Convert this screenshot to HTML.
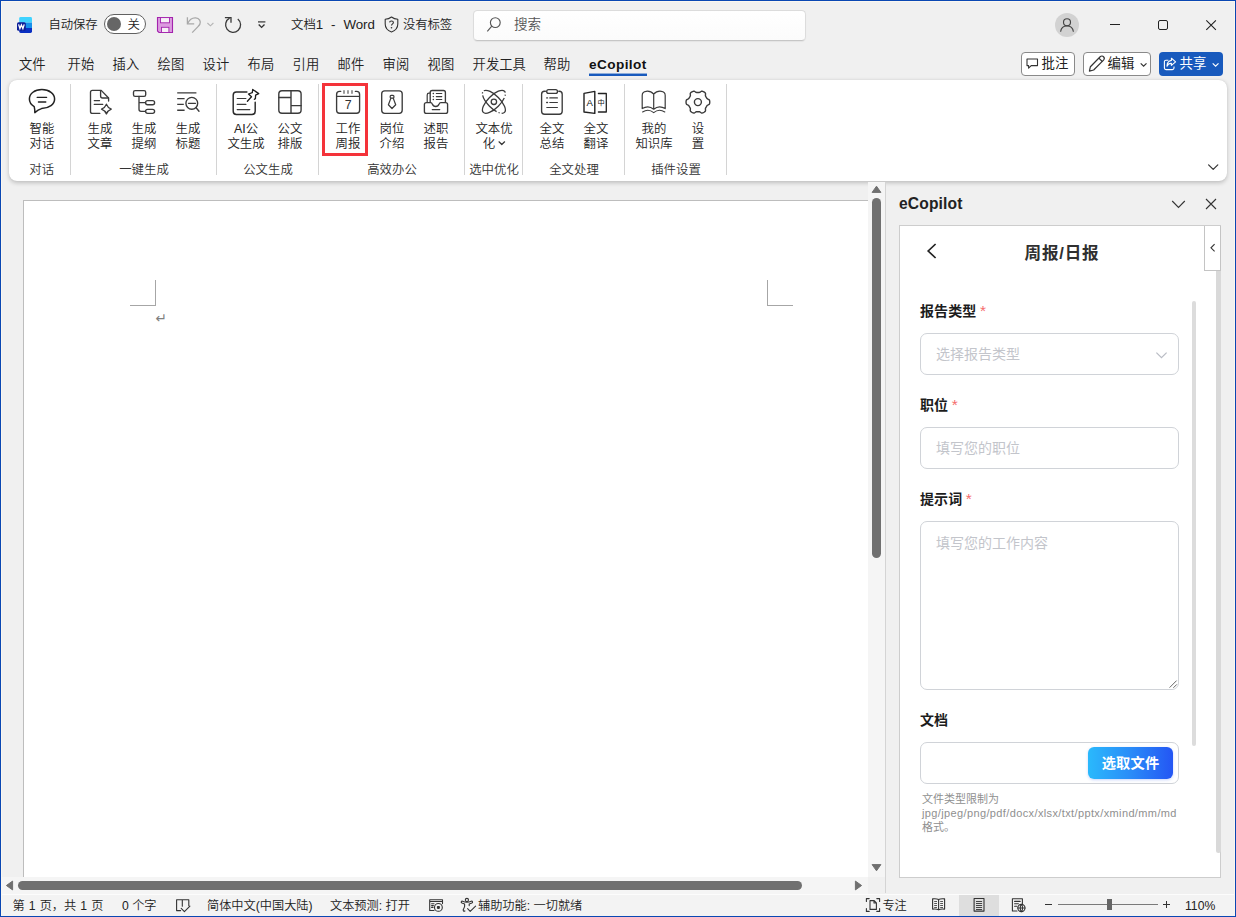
<!DOCTYPE html>
<html lang="zh-CN">
<head>
<meta charset="utf-8">
<title>文档1 - Word</title>
<style>
*{box-sizing:border-box;margin:0;padding:0}
html,body{width:1236px;height:917px;overflow:hidden}
body{background:#f0f0f0;font-family:"Liberation Sans","Noto Sans CJK SC",sans-serif;color:#222;position:relative;font-size:12px}
.abs{position:absolute}
.t{position:absolute;white-space:nowrap;line-height:1}
svg{position:absolute;overflow:visible}
#frame{position:absolute;left:0;top:0;width:1236px;height:917px;border:1px solid #0a47b3;pointer-events:none;z-index:50}
#frame2{position:absolute;left:1px;top:1px;width:1234px;height:915px;border:1px solid #fbf7f0;border-bottom:none;pointer-events:none;z-index:49}
/* title bar */
.tb{font-size:13px;color:#222;font-weight:350}
/* tabs */
.tab{position:absolute;top:58px;font-weight:350;font-size:13.3px;line-height:14px;color:#222;white-space:nowrap}
/* ribbon */
#ribbon{position:absolute;left:8.5px;top:80px;width:1218.5px;height:101px;background:#fff;border-radius:8px;box-shadow:0 1.5px 4px rgba(0,0,0,.2),0 0 1px rgba(0,0,0,.1)}
.rb{font-weight:350;position:absolute;top:121.5px;width:60px;margin-left:-30px;text-align:center;font-size:12.4px;line-height:15.1px;color:#222;white-space:nowrap}
.gl{font-weight:350;position:absolute;top:162.5px;width:80px;margin-left:-40px;text-align:center;font-size:12.4px;line-height:14px;color:#333;white-space:nowrap}
.sep{position:absolute;top:84px;width:1px;height:91px;background:#d4d4d4}
/* status */
.st{font-weight:350;position:absolute;top:899.4px;font-size:12.2px;line-height:14px;color:#222;white-space:nowrap}
.fl{font-size:14px;line-height:18px;font-weight:bold;color:#1c1c1c;letter-spacing:0.1px}
.rq{color:#f56c6c;font-weight:normal;font-size:15.5px;position:relative;top:0px;left:-0.5px;font-family:'Liberation Sans',sans-serif}
.fb{background:#fff;border:1px solid #d0d3d8;border-radius:7px}
.ph{font-size:14px;line-height:17px;color:#c3c5cb}
.hp{font-size:11px;line-height:13px;color:#8f8f8f}
</style>
</head>
<body>
<div id="frame"></div><div id="frame2"></div>

<!-- TITLEBAR -->
<div id="titlebar">
<!-- word icon -->
<svg style="left:16px;top:16px" width="18" height="18" viewBox="0 0 18 18">
 <defs><clipPath id="wc"><rect x="3.2" y="1" width="12.8" height="16" rx="1.4"/></clipPath></defs>
 <g clip-path="url(#wc)"><rect x="3" y="1" width="13" height="5.6" fill="#3fd3ff"/><rect x="3" y="6.6" width="13" height="5.4" fill="#1690ea"/><rect x="3" y="12" width="13" height="5" fill="#0a2fc2"/></g>
 <rect x="1" y="6.2" width="8.8" height="8.6" rx="1.6" fill="#0c1f98"/>
 <path d="M2.6 8.4 L3.9 12.6 L5.4 8.9 L6.9 12.6 L8.2 8.4" fill="none" stroke="#fff" stroke-width="1.3" stroke-linejoin="miter"/>
</svg>
<div class="t tb" style="left:48.4px;top:17.5px;font-size:12.4px;line-height:14px;letter-spacing:-0.1px">自动保存</div>
<div class="abs" style="left:104px;top:14px;width:42px;height:20px;border:1px solid #616161;border-radius:10px;background:#fff"></div>
<div class="abs" style="left:107px;top:17px;width:14px;height:14px;border-radius:50%;background:#666"></div>
<div class="t tb" style="left:127.6px;top:17.5px;font-size:12.4px;line-height:14px">关</div>
<!-- save -->
<svg style="left:156px;top:16px" width="18" height="18" viewBox="0 0 18 18"><path d="M1.5 1.5 H16.5 V16.5 H3 L1.5 15 Z" fill="#dc9be0" stroke="#a323ad" stroke-width="1.1" stroke-linejoin="miter"/><rect x="4.5" y="1.6" width="9" height="5.2" fill="#f6f0f7" stroke="#a323ad" stroke-width="0.9"/><rect x="5.5" y="11.3" width="7.4" height="5.2" fill="#f6f0f7" stroke="#a323ad" stroke-width="0.9"/></svg>
<!-- undo -->
<svg style="left:186px;top:15px" width="30" height="20" viewBox="0 0 30 20"><path d="M1.4 2.2 V8.8 H8.2" fill="none" stroke="#a8a8a8" stroke-width="1.3"/><path d="M1.6 8.6 C3.5 4.5 6.5 2.6 9.6 2.8 C13.5 3.1 15.2 6.6 13.8 9.4 C13.4 10.2 12.8 10.8 12 11.6 L6.2 17.6" fill="none" stroke="#a8a8a8" stroke-width="1.3"/><path d="M21.4 8 L24.4 10.8 L27.4 8" fill="none" stroke="#b4b4b4" stroke-width="1.1"/></svg>
<!-- redo -->
<svg style="left:223px;top:14px" width="20" height="20" viewBox="0 0 20 20"><path d="M6.6 4.2 A7.5 7.5 0 1 0 14.8 5" fill="none" stroke="#3a3a3a" stroke-width="1.3"/><path d="M1.9 3.7 H8 V8.7" fill="none" stroke="#3a3a3a" stroke-width="1.3"/></svg>
<!-- qat -->
<svg style="left:256px;top:19px" width="12" height="10" viewBox="0 0 12 10"><path d="M2 2.9 H9.4" stroke="#333" stroke-width="1.2"/><path d="M2.7 5.6 L5.6 8.4 L8.5 5.6" fill="none" stroke="#333" stroke-width="1.4"/></svg>
<div class="t tb" style="left:291px;top:17px;font-size:13.3px;line-height:15px"><span style="font-size:12.4px">文档</span>1</div><div class="t tb" style="left:331px;top:17px;font-size:13.3px;line-height:15px">-</div><div class="t tb" style="left:343.4px;top:17px;font-size:13.3px;line-height:15px">Word</div>
<!-- shield -->
<svg style="left:384px;top:16px" width="15" height="17" viewBox="0 0 15 17"><path d="M7.5 1 C9.5 2.6 11.5 3.2 13.8 3.3 V8 C13.8 11.8 11.3 14.6 7.5 16 C3.7 14.6 1.2 11.8 1.2 8 V3.3 C3.5 3.2 5.5 2.6 7.5 1 Z" fill="none" stroke="#333" stroke-width="1.1" stroke-linejoin="round"/><path d="M5.6 6.4 C5.7 4.6 9.4 4.6 9.4 6.5 C9.4 7.9 7.5 7.9 7.5 9.6" fill="none" stroke="#333" stroke-width="1.1"/><circle cx="7.5" cy="11.8" r="0.8" fill="#333"/></svg>
<div class="t tb" style="left:403px;top:17.5px;font-size:12.4px;line-height:14px;letter-spacing:-0.1px">没有标签</div>
<!-- search -->
<div class="abs" style="left:473px;top:9.5px;width:333px;height:31.5px;background:linear-gradient(#fff,#fbfbfb);border:1px solid #dcdcdc;border-bottom-color:#c6c6c6;border-radius:4.5px;box-shadow:0 1px 1px rgba(0,0,0,.05)"></div>
<svg style="left:486px;top:16px" width="16" height="17" viewBox="0 0 16 17"><circle cx="9.3" cy="6.6" r="4.9" fill="none" stroke="#555" stroke-width="1.15"/><path d="M5.8 10.2 L1.3 15.4" stroke="#555" stroke-width="1.15"/></svg>
<div class="t tb" style="left:514px;top:17px;font-size:13.6px;line-height:15px;color:#555">搜索</div>
<!-- avatar -->
<div class="abs" style="left:1055px;top:13px;width:24px;height:24px;border-radius:50%;background:#d2d2d2"></div>
<svg style="left:1059px;top:17px" width="16" height="16" viewBox="0 0 16 16"><circle cx="8" cy="5.2" r="3.5" fill="none" stroke="#444" stroke-width="1.15"/><path d="M1.6 14.8 C2.6 6.8 13.4 6.8 14.4 14.8" fill="none" stroke="#444" stroke-width="1.15"/></svg>
<div class="abs" style="left:1110px;top:24px;width:10px;height:1px;background:#222"></div>
<div class="abs" style="left:1158px;top:20px;width:10px;height:10px;border:1px solid #222;border-radius:2px"></div>
<svg style="left:1206px;top:20px" width="12" height="12" viewBox="0 0 12 12"><path d="M0.3 0.3 L9.9 9.9 M9.9 0.3 L0.3 9.9" stroke="#222" stroke-width="1.1"/></svg>
<!-- right buttons -->
<div class="abs" style="left:1021px;top:52px;width:54px;height:24px;background:#fff;border:1px solid #8a8a8a;border-radius:4px"></div>
<svg style="left:1026px;top:58px" width="13" height="12" viewBox="0 0 13 12"><path d="M1 1 H11.5 V7.6 H5.2 L2.6 10.2 V7.6 H1 Z" fill="none" stroke="#333" stroke-width="1.1" stroke-linejoin="round"/></svg>
<div class="t" style="left:1041.5px;top:56px;font-size:13.4px;line-height:15px;color:#222">批注</div>
<div class="abs" style="left:1083px;top:52px;width:68px;height:24px;background:#fff;border:1px solid #8a8a8a;border-radius:4px"></div>
<svg style="left:1087.6px;top:55.4px" width="17.4" height="17.4" viewBox="0 0 16 16"><path d="M11.2 1.6 C12.2 0.6 13.6 0.8 14.3 1.6 C15.1 2.4 15.2 3.7 14.3 4.7 L5.2 13.8 L1.3 14.8 L2.2 10.8 Z" fill="none" stroke="#333" stroke-width="1.1" stroke-linejoin="round"/><path d="M10 2.9 L13.1 6" stroke="#333" stroke-width="1.1"/></svg>
<div class="t" style="left:1107.5px;top:56px;font-size:13.4px;line-height:15px;color:#222">编辑</div>
<svg style="left:1139px;top:61.5px" width="9" height="6" viewBox="0 0 9 6"><path d="M1.7 1.4 L4.6 4.2 L7.5 1.4" fill="none" stroke="#333" stroke-width="1.2"/></svg>
<div class="abs" style="left:1159px;top:52px;width:64px;height:24px;background:#185abd;border-radius:4px"></div>
<svg style="left:1163px;top:57px" width="14" height="14" viewBox="0 0 14 14"><path d="M5.4 3.2 H3 C2 3.2 1.4 3.8 1.4 4.8 V11 C1.4 12 2 12.6 3 12.6 H9.4 C10.4 12.6 11 12 11 11 V9.6" fill="none" stroke="#fff" stroke-width="1.1"/><path d="M8.4 1.2 L12.6 4.9 L8.4 8.4 V6.4 C6.2 6.3 4.9 7.2 4 9.2 C4.1 5.8 5.6 3.8 8.4 3.4 Z" fill="none" stroke="#fff" stroke-width="1.1" stroke-linejoin="round"/></svg>
<div class="t" style="left:1179.5px;top:56px;font-size:13.4px;line-height:15px;color:#fff">共享</div>
<svg style="left:1211px;top:61.5px" width="9" height="6" viewBox="0 0 9 6"><path d="M1.7 1.4 L4.6 4.2 L7.5 1.4" fill="none" stroke="#fff" stroke-width="1.2"/></svg>
</div>

<!-- TABS -->
<div id="tabs">
<div class="tab" style="left:19px">文件</div>
<div class="tab" style="left:67.6px">开始</div>
<div class="tab" style="left:112.6px">插入</div>
<div class="tab" style="left:157.6px">绘图</div>
<div class="tab" style="left:202.6px">设计</div>
<div class="tab" style="left:247.6px">布局</div>
<div class="tab" style="left:292.6px">引用</div>
<div class="tab" style="left:337.6px">邮件</div>
<div class="tab" style="left:382.6px">审阅</div>
<div class="tab" style="left:427.6px">视图</div>
<div class="tab" style="left:472.6px">开发工具</div>
<div class="tab" style="left:543.6px">帮助</div>
<div class="tab" style="left:589px;font-weight:bold;font-size:13.6px;color:#111;letter-spacing:0.42px">eCopilot</div>
<div class="abs" style="left:589px;top:73px;width:58px;height:1px;background:rgba(24,90,189,.45)"></div><div class="abs" style="left:589px;top:74px;width:58px;height:2px;background:#185abd"></div>
</div>

<!-- RIBBON -->
<div id="ribbon"></div>
<div id="ribbonc">
<svg id="ricons" style="left:0;top:0" width="1236" height="200" viewBox="0 0 1236 200">
<g stroke="#3b3b3b" fill="none" stroke-width="1.35" stroke-linecap="round" stroke-linejoin="round">
<!-- 1 chat -->
<path d="M41.9 89.6 C49.2 89.6 54.6 93.6 54.6 99 C54.6 104.4 49.4 108.2 41.5 108.6 C38.8 109.4 37 110.6 34.8 112.6 C34.9 110.6 34.7 108.6 34.2 106.6 C31.2 104.8 29.4 102.2 29.4 99 C29.4 93.6 34.6 89.6 41.9 89.6 Z" stroke="#222" stroke-width="1.5"/>
<path d="M37.2 97.4 H46.6 M38.4 102 H45.8" stroke="#222" stroke-width="1.3"/>
<!-- 2 doc sparkle -->
<path d="M99.8 113.4 H92.4 C91.2 113.4 90.5 112.7 90.5 111.5 V92.3 C90.5 91.1 91.2 90.4 92.4 90.4 H101.2 L108.6 98 V101"/>
<path d="M100.6 90.6 V96 C100.6 97.4 101.3 98 102.6 98 H108.4"/>
<path d="M94.2 100.6 H99.6 M94.2 104.4 H102.8" stroke-width="1.1"/>
<path d="M106.4 104.2 C107.3 106.6 108.8 108.2 111.3 109.1 C108.8 110 107.3 111.6 106.4 114 C105.5 111.6 104 110 101.5 109.1 C104 108.2 105.5 106.6 106.4 104.2 Z" stroke-width="1.25"/>
<!-- 3 tree -->
<rect x="133.5" y="90.6" width="12.2" height="5.8" rx="1.6"/>
<path d="M139 96.4 V109.2 C139 110.6 139.7 111.3 141 111.3 H145.4 M139 102.6 H145.4"/>
<rect x="145.6" y="100.6" width="9" height="4.1" rx="2.05"/>
<rect x="145.6" y="109.3" width="9" height="4.1" rx="2.05"/>
<!-- 4 lines + search -->
<path d="M177.2 92.8 H196.4 M177.2 98.6 H184.6 M177.2 104.3 H183.8 M177.2 110.2 H184.6" stroke-linecap="butt"/>
<circle cx="191.8" cy="103.3" r="5.9"/>
<path d="M188.5 103.3 H195.5 M196.1 107.8 L199 111.2"/>
<!-- 5 note + pin -->
<path d="M246.9 92 H236.4 C234.3 92 233.2 93.1 233.2 95.2 V111.2 C233.2 113.3 234.3 114.4 236.4 114.4 H252 C254.1 114.4 255.2 113.3 255.2 111.2 V102.3" stroke-width="1.45" stroke="#2a2a2a"/>
<path d="M237.2 98.5 H245.9 M237.2 104.4 H245.9 M237.2 109.6 H249.8" stroke-width="1.2"/>
<path d="M247.4 101.3 L251.5 96.8 L248.5 94 L252.3 92.7 L252.7 89.5 L258.7 93.6 L255.6 95.1 L255.4 98.6 L254.4 99.3" stroke="#1c1c1c" stroke-width="1.3"/>
<!-- 6 layout -->
<rect x="278.8" y="90.8" width="22.3" height="22.4" rx="3.2" stroke-width="1.4"/>
<path d="M291 90.8 V113.2 M278.8 97.5 H291 M291 105.6 H301.1" stroke-width="1.4"/>
<!-- 7 calendar -->
<path d="M340.7 91.4 H339.6 C337.6 91.4 336.6 92.4 336.6 94.4 V110.2 C336.6 112.2 337.6 113.2 339.6 113.2 H356.6 C358.6 113.2 359.6 112.2 359.6 110.2 V94.4 C359.6 92.4 358.6 91.4 356.6 91.4 H355.4"/><path d="M336.6 96.4 H359.6" stroke-width="1.2" stroke-linecap="butt"/>
<path d="M344 90.7 V93.3 M348 90.7 V93.3 M352 90.7 V93.3" stroke-width="1.3" stroke="#666"/>
<!-- 8 tie -->
<rect x="381.7" y="90.8" width="20.5" height="22.5" rx="3"/>
<rect x="390.2" y="95.4" width="3.7" height="2.8" rx="0.9" stroke-width="1.2"/>
<path d="M390.8 98.4 L388.4 104.7 L392 108.5 L395.7 104.7 L393.3 98.4" stroke-width="1.25"/>
<!-- 9 inbox -->
<path d="M430.2 102.4 V92.4 C430.2 91.1 430.9 90.5 432.2 90.5 H443.4 C444.8 90.5 445.4 91.1 445.4 92.4 V102.4"/>
<path d="M427.2 102.4 V95 C427.2 93.8 427.9 93.2 429 93.2 H430" stroke-width="1.2"/>
<path d="M424.4 104.6 C424.4 103.2 425 102.6 426.4 102.6 H430.6 C431.6 102.6 432 103.1 432.3 104 C433.5 107.3 437.9 107.3 439.1 104 C439.4 103.1 439.8 102.6 440.8 102.6 H445.6 C447 102.6 447.6 103.2 447.6 104.6 V111.4 C447.6 112.8 447 113.4 445.6 113.4 H426.4 C425 113.4 424.4 112.8 424.4 111.4 Z"/>
<path d="M432.2 109.6 H439.8 M436.3 93.5 H441.8 M436.3 96.6 H441.8 M436.3 99.5 H441.8" stroke-width="1.1"/>
<path d="M433.2 93.5 h0.3 M433.2 96.6 h0.3 M433.2 99.5 h0.3" stroke-width="1.3"/>
<!-- 10 atom -->
<ellipse cx="493.9" cy="101.8" rx="15" ry="6.2" transform="rotate(45 493.9 101.8)" stroke-width="1.3" pathLength="100" stroke-dasharray="4.5 3 1.6 3.2 31 3.2 1.6 3 48.9" stroke-linecap="butt"/>
<ellipse cx="493.9" cy="101.8" rx="15" ry="6.2" transform="rotate(-45 493.9 101.8)" stroke-width="1.3" pathLength="100" stroke-dasharray="2.5 3 1.6 3.2 89.7" stroke-linecap="butt"/>
<circle cx="493.9" cy="101.8" r="2.7" stroke-width="1.3"/>
<!-- 11 clipboard -->
<path d="M545.4 91.2 H544.6 C542.6 91.2 541.6 92.2 541.6 94.2 V111.2 C541.6 113.2 542.6 114.2 544.6 114.2 H559.2 C561.2 114.2 562.2 113.2 562.2 111.2 V94.2 C562.2 92.2 561.2 91.2 559.2 91.2 H558.8"/>
<rect x="546.7" y="89.6" width="10.8" height="3.8" rx="1.9"/>
<path d="M549.8 97.9 H557.4 M549.8 102.5 H557.4 M546.8 107.5 H557.4" stroke-width="1.2"/><path d="M546.7 97.9 h0.8 M546.7 102.5 h0.8" stroke-width="1.4"/>
<!-- 12 translate -->
<path d="M584 93.4 L594.8 91.4 V113.4 L584 112 Z" stroke="#222" stroke-width="1.4"/>
<path d="M598.4 93.5 H606.3 V112 H598.4" stroke="#222" stroke-width="1.3"/>
<!-- 13 book -->
<path d="M653.7 94.2 C651.6 91.8 648.6 91 646.2 91.3 C643.6 91.6 642.2 93.2 642.2 95.4 V108.6 C646 106.2 650.4 106.4 653.7 109.2 C657 106.4 661.4 106.2 665.2 108.6 V95.4 C665.2 93.2 663.8 91.6 661.2 91.3 C658.8 91 655.8 91.8 653.7 94.2 V109.2" stroke-width="1.2"/>
<path d="M642.6 112 C646.2 109.6 650.4 109.8 653.7 112.6 C657 109.8 661.2 109.6 664.8 112" stroke-width="1.1"/>
<!-- 14 gear -->
<path d="M709.75 102.10 L709.73 102.72 L709.65 103.34 L709.48 103.93 L709.07 104.47 L708.28 104.88 L707.49 105.22 L707.03 105.61 L706.75 106.04 L706.50 106.48 L706.26 106.92 L706.00 107.36 L705.74 107.79 L705.50 108.26 L705.39 108.85 L705.50 109.70 L705.54 110.58 L705.28 111.21 L704.84 111.66 L704.35 112.03 L703.82 112.36 L703.28 112.65 L702.71 112.89 L702.10 113.04 L701.43 112.96 L700.68 112.48 L700.00 111.96 L699.43 111.76 L698.91 111.73 L698.41 111.74 L697.90 111.75 L697.39 111.74 L696.89 111.73 L696.37 111.76 L695.80 111.96 L695.12 112.48 L694.37 112.96 L693.70 113.04 L693.09 112.89 L692.52 112.65 L691.98 112.36 L691.45 112.03 L690.96 111.66 L690.52 111.21 L690.26 110.58 L690.30 109.70 L690.41 108.85 L690.30 108.26 L690.06 107.79 L689.80 107.36 L689.54 106.92 L689.30 106.48 L689.05 106.04 L688.77 105.61 L688.31 105.22 L687.52 104.88 L686.73 104.47 L686.32 103.93 L686.15 103.34 L686.07 102.72 L686.05 102.10 L686.07 101.48 L686.15 100.86 L686.32 100.27 L686.73 99.73 L687.52 99.32 L688.31 98.98 L688.77 98.59 L689.05 98.16 L689.30 97.72 L689.54 97.27 L689.80 96.84 L690.06 96.41 L690.30 95.94 L690.41 95.35 L690.30 94.50 L690.26 93.62 L690.52 92.99 L690.96 92.54 L691.45 92.17 L691.98 91.84 L692.52 91.55 L693.09 91.31 L693.70 91.16 L694.37 91.24 L695.12 91.72 L695.80 92.24 L696.37 92.44 L696.89 92.47 L697.39 92.46 L697.90 92.45 L698.41 92.46 L698.91 92.47 L699.43 92.44 L700.00 92.24 L700.68 91.72 L701.43 91.24 L702.10 91.16 L702.71 91.31 L703.28 91.55 L703.82 91.84 L704.35 92.17 L704.84 92.54 L705.28 92.99 L705.54 93.62 L705.50 94.50 L705.39 95.35 L705.50 95.94 L705.74 96.41 L706.00 96.84 L706.26 97.27 L706.50 97.72 L706.75 98.16 L707.03 98.59 L707.49 98.98 L708.28 99.32 L709.07 99.73 L709.48 100.27 L709.65 100.86 L709.73 101.48 Z" stroke-width="1.4"/>
<circle cx="697.9" cy="102.1" r="3.5" stroke-width="1.4"/>
<!-- chevron for 文本优化 -->
<path d="M499 141.8 L501.8 144.5 L504.6 141.8" stroke="#333" stroke-width="1.2"/>
<!-- ribbon collapse -->
<path d="M1208.6 164.8 L1213.2 169.4 L1217.8 164.8" stroke="#333" stroke-width="1.2"/>
</g>
<text x="348.1" y="109.3" font-family="Liberation Sans, sans-serif" font-size="12.4" fill="#333" text-anchor="middle">7</text>
<text x="589.8" y="106.1" font-family="Liberation Sans, sans-serif" font-size="9.6" fill="#111" text-anchor="middle">A</text>
<text x="601.1" y="105.4" font-family="Noto Sans CJK SC, sans-serif" font-size="7.2" fill="#111" text-anchor="middle">中</text>
</svg>
<div class="rb" style="left:42px">智能<br>对话</div>
<div class="rb" style="left:100px">生成<br>文章</div>
<div class="rb" style="left:144px">生成<br>提纲</div>
<div class="rb" style="left:188px">生成<br>标题</div>
<div class="rb" style="left:246px">AI公<br>文生成</div>
<div class="rb" style="left:290px">公文<br>排版</div>
<div class="rb" style="left:348px">工作<br>周报</div>
<div class="rb" style="left:392px">岗位<br>介绍</div>
<div class="rb" style="left:436px">述职<br>报告</div>
<div class="rb" style="left:494px">文本优<br>化&nbsp;&nbsp;&nbsp;</div>
<div class="rb" style="left:552px">全文<br>总结</div>
<div class="rb" style="left:596px">全文<br>翻译</div>
<div class="rb" style="left:654px">我的<br>知识库</div>
<div class="rb" style="left:698px">设<br>置</div>
<div class="sep" style="left:70px"></div>
<div class="sep" style="left:216px"></div>
<div class="sep" style="left:318px"></div>
<div class="sep" style="left:464px"></div>
<div class="sep" style="left:522px"></div>
<div class="sep" style="left:624px"></div>
<div class="sep" style="left:726px"></div>
<div class="gl" style="left:41.7px">对话</div>
<div class="gl" style="left:144px">一键生成</div>
<div class="gl" style="left:268px">公文生成</div>
<div class="gl" style="left:392px">高效办公</div>
<div class="gl" style="left:494px">选中优化</div>
<div class="gl" style="left:574px">全文处理</div>
<div class="gl" style="left:676px">插件设置</div>
<div class="abs" style="left:322px;top:83px;width:46px;height:73px;border:3px solid #f4333a"></div>
</div>

<!-- DOC -->
<div id="doc">
<!-- page -->
<div class="abs" style="left:23px;top:200px;width:846px;height:677px;background:#fff;border-left:1px solid #bdbdbd;border-top:1px solid #bdbdbd"></div>
<!-- crop marks -->
<div class="abs" style="left:130px;top:305px;width:26px;height:1px;background:#a6a6a6"></div>
<div class="abs" style="left:155px;top:280px;width:1px;height:26px;background:#a6a6a6"></div>
<div class="abs" style="left:767px;top:305px;width:26px;height:1px;background:#a6a6a6"></div>
<div class="abs" style="left:767px;top:280px;width:1px;height:26px;background:#a6a6a6"></div>
<div class="t" style="left:155.5px;top:309.9px;font-family:'DejaVu Sans',sans-serif;font-size:13.6px;line-height:16px;color:#808080">↵</div>
<!-- v scrollbar -->
<div class="abs" style="left:868px;top:182px;width:17px;height:695px;background:#f5f5f5"></div>
<div class="abs" style="left:885px;top:182px;width:1px;height:711px;background:#d4d4d4"></div>
<div class="abs" style="left:872px;top:198px;width:9px;height:360px;background:#707070;border-radius:4.5px"></div>
<svg style="left:871px;top:185px" width="11" height="9" viewBox="0 0 11 9"><path d="M5.5 1.2 L9.9 7.4 H1.1 Z" fill="#707070" stroke="#707070" stroke-width="1" stroke-linejoin="round"/></svg>
<svg style="left:871px;top:863px" width="11" height="9" viewBox="0 0 11 9"><path d="M5.5 7.8 L9.9 1.6 H1.1 Z" fill="#707070" stroke="#707070" stroke-width="1" stroke-linejoin="round"/></svg>
<!-- h scrollbar -->
<div class="abs" style="left:1px;top:877px;width:867px;height:17px;background:#f5f5f5"></div>
<div class="abs" style="left:868px;top:877px;width:17px;height:17px;background:#f0f0f0"></div>
<div class="abs" style="left:18px;top:881px;width:784px;height:9px;background:#707070;border-radius:4.5px"></div>
<svg style="left:5px;top:880px" width="9" height="11" viewBox="0 0 9 11"><path d="M1.4 5.5 L7.6 1.1 V9.9 Z" fill="#707070" stroke="#707070" stroke-width="1" stroke-linejoin="round"/></svg>
<svg style="left:854px;top:880px" width="9" height="11" viewBox="0 0 9 11"><path d="M7.6 5.5 L1.4 1.1 V9.9 Z" fill="#707070" stroke="#707070" stroke-width="1" stroke-linejoin="round"/></svg>
</div>

<!-- PANE -->
<div id="pane">
<div class="t" style="left:899px;top:195px;font-size:15.6px;line-height:17px;font-weight:bold;color:#222;letter-spacing:0.15px">eCopilot</div>
<svg style="left:1171px;top:199px" width="15" height="10" viewBox="0 0 15 10"><path d="M1.2 2 L7.5 8.4 L13.8 2" fill="none" stroke="#333" stroke-width="1.1"/></svg>
<svg style="left:1205px;top:198px" width="12" height="12" viewBox="0 0 12 12"><path d="M1 1 L11 11 M11 1 L1 11" stroke="#333" stroke-width="1.1"/></svg>
<!-- web panel -->
<div class="abs" style="left:899px;top:225px;width:322px;height:653px;background:#fff;border:1px solid #cdcdcd"></div>
<!-- outer scrollbar -->
<div class="abs" style="left:1216px;top:270px;width:5px;height:583px;background:#d9d9d9;border-radius:0 0 2.5px 2.5px"></div>
<!-- collapse handle -->
<div class="abs" style="left:1204px;top:226px;width:17px;height:45px;background:#fff;border:1px solid #c4c4c4;border-top:none"></div>
<svg style="left:1209px;top:243px" width="8" height="10" viewBox="0 0 8 10"><path d="M5.6 1.2 L2 4.8 L5.6 8.4" fill="none" stroke="#333" stroke-width="1.1"/></svg>
<!-- inner scrollbar -->
<div class="abs" style="left:1192px;top:301px;width:4px;height:445px;background:#dcdcdc;border-radius:2px"></div>
<!-- header -->
<svg style="left:925px;top:242px" width="14" height="18" viewBox="0 0 14 18"><path d="M10.6 2 L3.2 9 L10.6 16" fill="none" stroke="#222" stroke-width="1.7"/></svg>
<div class="t" style="left:962px;top:244px;width:200px;text-align:center;font-size:16.6px;line-height:20px;font-weight:bold;color:#303030;letter-spacing:0.8px">周报/日报</div>
<!-- fields -->
<div class="t fl" style="left:920px;top:302px">报告类型 <span class="rq">*</span></div>
<div class="abs fb" style="left:920px;top:333px;width:259px;height:42px"></div>
<div class="t ph" style="left:936px;top:346px">选择报告类型</div>
<svg style="left:1155px;top:350.8px" width="13" height="9" viewBox="0 0 13 9"><path d="M1.4 1.6 L6.5 6.6 L11.6 1.6" fill="none" stroke="#b9bcc4" stroke-width="1.2"/></svg>
<div class="t fl" style="left:920px;top:396px">职位 <span class="rq">*</span></div>
<div class="abs fb" style="left:920px;top:427px;width:259px;height:42px"></div>
<div class="t ph" style="left:936px;top:440px">填写您的职位</div>
<div class="t fl" style="left:920px;top:490px">提示词 <span class="rq">*</span></div>
<div class="abs fb" style="left:920px;top:521px;width:259px;height:169px"></div>
<div class="t ph" style="left:936px;top:535px">填写您的工作内容</div>
<svg style="left:1168px;top:679px" width="10" height="10" viewBox="0 0 10 10"><path d="M1.6 8.6 L8.6 1.6 M5.4 8.8 L8.8 5.4" stroke="#555" stroke-width="0.9"/></svg>
<div class="t fl" style="left:920px;top:711px">文档</div>
<div class="abs fb" style="left:920px;top:742px;width:259px;height:42px"></div>
<div class="abs" style="left:1088px;top:747px;width:85px;height:32px;border-radius:6px;background:linear-gradient(90deg,#2ab9fc 0%,#2a8cf8 50%,#2456f4 100%);box-shadow:0 1px 3px rgba(36,86,244,.25)"></div>
<div class="t" style="left:1088px;top:754.7px;width:85px;text-align:center;font-size:14.2px;line-height:17px;font-weight:bold;color:#fff;letter-spacing:0.2px">选取文件</div>
<div class="t hp" style="left:922px;top:793px">文件类型限制为</div>
<div class="t hp" style="left:922px;top:807px;letter-spacing:0.375px">jpg/jpeg/png/pdf/docx/xlsx/txt/pptx/xmind/mm/md</div>
<div class="t hp" style="left:922px;top:821px">格式。</div>
</div>

<!-- STATUS -->
<div id="status">
<div class="abs" style="left:1px;top:894px;width:1234px;height:22px;background:#f3f3f3;border-top:1px solid #fcfcfc"></div>
<div class="st" style="left:12.5px;word-spacing:0.7px">第 1 页，共 1 页</div>
<div class="st" style="left:122px">0 个字</div>
<svg style="left:170px;top:895px" width="24" height="20" viewBox="170 895 24 20"><path d="M180.6 910.6 H176.6 V899.7 H188.8 V905.6 M182.3 899.7 V906.2 M181.2 908.4 L184.4 911.6 L189.9 906.1" fill="none" stroke="#333" stroke-width="1.1" stroke-linejoin="round" stroke-linecap="round" stroke-linejoin="miter" stroke-linecap="butt" stroke-width="1.2"/></svg>
<div class="st" style="left:207px">简体中文(中国大陆)</div>
<div class="st" style="left:330px">文本预测: 打开</div>
<svg style="left:424px;top:895px" width="24" height="20" viewBox="424 895 24 20"><path d="M434 910.5 H429.7 V899.7 H442.5 V903.6 M429.7 901.5 H442.5" fill="none" stroke="#333" stroke-width="1.1" stroke-linejoin="round" stroke-linecap="round" stroke-linejoin="miter" stroke-linecap="butt" stroke-width="1.2"/><path d="M431.6 903.7 H434 M431.6 905.6 H433.4 M431.6 907.4 H433" fill="none" stroke="#333" stroke-width="1.1" stroke-linejoin="round" stroke-linecap="round" stroke-linecap="butt" stroke-width="1"/><circle cx="438.4" cy="907.4" r="3.9" fill="none" stroke="#333" stroke-width="1.1" stroke-linejoin="round" stroke-linecap="round" stroke-width="1.2"/><rect x="436.9" y="905.9" width="3" height="3" rx="0.8" fill="#333"/></svg>
<svg style="left:456px;top:895px" width="24" height="20" viewBox="456 895 24 20"><circle cx="466.9" cy="900" r="1.6" fill="none" stroke="#333" stroke-width="1.1" stroke-linejoin="round" stroke-linecap="round" stroke-width="1.1"/><path d="M464.9 910.9 C463.6 911.6 462.8 910.4 463.4 909.4 L464.6 906.6 V903.9 L461.9 902.9 C460.6 902.3 461.4 900.7 462.6 901.2 C465.4 902.4 468.4 902.4 471.2 901.2 C472.4 900.7 473.2 902.3 471.9 902.9 L469.2 903.9 V905.6" fill="none" stroke="#333" stroke-width="1.1" stroke-linejoin="round" stroke-linecap="round" stroke-width="1.1"/><path d="M467.6 908.7 L470.2 911.3 L475.6 906.1" fill="none" stroke="#333" stroke-width="1.1" stroke-linejoin="round" stroke-linecap="round" stroke-width="1.2" stroke-linecap="butt" stroke-linejoin="miter"/></svg>
<div class="st" style="left:478px">辅助功能: 一切就绪</div>
<svg style="left:865px;top:897px" width="16" height="16" viewBox="0 0 16 16"><path d="M1.4 4.4 V1.6 H4.2 M11.8 1.6 H14.6 V4.4 M14.6 11.6 V14.4 H11.8 M4.2 14.4 H1.4 V11.6" fill="none" stroke="#333" stroke-width="1.1" stroke-linejoin="round" stroke-linecap="round"/><path d="M5 3.6 H9.2 L11.4 5.8 V12.4 H5 Z M9 3.8 V6 H11.2" fill="none" stroke="#333" stroke-width="1.1" stroke-linejoin="round" stroke-linecap="round" stroke-width="1"/></svg>
<div class="st" style="left:882.4px">专注</div>
<svg style="left:928px;top:895px" width="22" height="20" viewBox="928 895 22 20"><path d="M938.6 899.6 V909.8 M938.6 899.6 C937 898.7 934.6 898.6 932.6 898.9 V909.1 C934.6 908.8 937 908.9 938.6 909.8 M938.6 899.6 C940.2 898.7 942.6 898.6 944.6 898.9 V909.1 C942.6 908.8 940.2 908.9 938.6 909.8" fill="none" stroke="#333" stroke-width="1.1" stroke-linejoin="round" stroke-linecap="round" stroke-width="1.15"/><path d="M934.2 901.5 H937 M934.2 903.5 H937 M934.2 905.5 H937 M934.2 907.5 H937 M940.2 901.5 H943 M940.2 903.5 H943 M940.2 905.5 H943 M940.2 907.5 H943" fill="none" stroke="#555" stroke-width="1" stroke-linecap="butt"/></svg>
<div class="abs" style="left:959px;top:895px;width:40px;height:21px;background:#dedede"></div>
<svg style="left:968px;top:895px" width="22" height="20" viewBox="968 895 22 20"><rect x="974.1" y="898.5" width="9.9" height="12.6" fill="none" stroke="#333" stroke-width="1.1" stroke-linejoin="round" stroke-linecap="round" stroke-linejoin="miter" stroke-width="1.15"/><path d="M976 901.5 H982.1 M976 903.5 H982.1 M976 905.5 H982.1 M976 907.5 H982.1 M976 909.5 H982.1" fill="none" stroke="#444" stroke-width="1" stroke-linecap="butt"/></svg>
<svg style="left:1010px;top:897px" width="17" height="16" viewBox="0 0 17 16"><path d="M7 14 H2.4 V1.8 H12.4 V6.4 M4.6 4.4 H10.2 M4.6 6.8 H8.4 M4.6 9.2 H6.8" fill="none" stroke="#333" stroke-width="1.1" stroke-linejoin="round" stroke-linecap="round"/><circle cx="11.4" cy="11" r="3.6" fill="none" stroke="#333" stroke-width="1.1" stroke-linejoin="round" stroke-linecap="round"/><path d="M7.8 11 H15 M11.4 7.4 C9.8 9 9.8 13 11.4 14.6 C13 13 13 9 11.4 7.4" fill="none" stroke="#333" stroke-width="1.1" stroke-linejoin="round" stroke-linecap="round" stroke-width="0.9"/></svg>
<div class="abs" style="left:1045px;top:904px;width:7px;height:1px;background:#333"></div>
<div class="abs" style="left:1058px;top:904px;width:100px;height:1px;background:#7a7a7a"></div>
<div class="abs" style="left:1107px;top:899px;width:5px;height:11px;background:#666"></div>
<div class="abs" style="left:1163px;top:904px;width:7px;height:1px;background:#333"></div>
<div class="abs" style="left:1166px;top:901px;width:1px;height:7px;background:#333"></div>
<div class="st" style="left:1185px">110%</div>
</div>
</body>
</html>
